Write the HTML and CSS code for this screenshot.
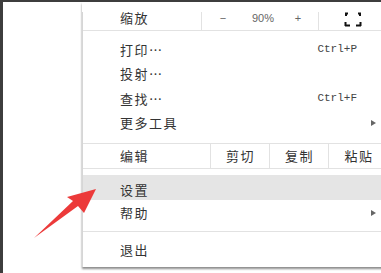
FILE: index.html
```html
<!DOCTYPE html>
<html lang="zh">
<head>
<meta charset="utf-8">
<link rel="stylesheet" href="styles.css">
</head>
<body>
<div class="frame">
  <div class="menu">
    <div class="zoomrow">
      <div class="zlabel">缩放</div>
      <div class="zctrl"><span class="zminus">−</span><span class="zval">90%</span><span class="zplus">+</span></div>
      <div class="zfs">
        <svg class="fsicon" width="18" height="15" viewBox="0 0 18 15"><path d="M2 1V4M1 1.5H4M16 1V4M14 1.5H17M1.5 10V14M1 13.5H6M16.5 10V14M12 13.5H17" stroke="#111" stroke-width="2" fill="none"/></svg>
      </div>
    </div>
    <div class="section s2">
      <div class="item"><span class="lbl">打印…</span><span class="sc">Ctrl+P</span><span class="sub"></span></div>
      <div class="item"><span class="lbl">投射…</span><span class="sc"></span><span class="sub"></span></div>
      <div class="item"><span class="lbl">查找…</span><span class="sc">Ctrl+F</span><span class="sub"></span></div>
      <div class="item"><span class="lbl">更多工具</span><span class="sc"></span><span class="sub"><i class="tri"></i></span></div>
    </div>
    <div class="editrow">
      <div class="elabel">编辑</div>
      <div class="ecell">剪切</div>
      <div class="ecell">复制</div>
      <div class="ecell last">粘贴</div>
    </div>
    <div class="section s3">
      <div class="item hl"><span class="lbl">设置</span><span class="sc"></span><span class="sub"></span></div>
      <div class="item"><span class="lbl">帮助</span><span class="sc"></span><span class="sub"><i class="tri"></i></span></div>
    </div>
    <div class="s4">
      <div class="item quit"><span class="lbl">退出</span><span class="sc"></span><span class="sub"></span></div>
    </div>
  </div>
  <svg class="arrow" width="381" height="273" viewBox="0 0 381 273">
    <polygon points="96,189 84,213 78,206 34,238 73,201 67,197" fill="#ec3a3a"/>
  </svg>
</div>
</body>
</html>
```

FILE: styles.css
```css
html, body {
  margin: 0;
  padding: 0;
  width: 381px;
  height: 273px;
  overflow: hidden;
  background: #fff;
}
.frame {
  position: relative;
  box-sizing: border-box;
  width: 381px;
  height: 273px;
  border-top: 2px solid #3d3d3d;
  border-left: 3px solid #3d3d3d;
  font-family: "Noto Sans CJK SC", "Noto Sans", sans-serif;
  color: #333;
}
.menu {
  margin-left: 79px;
  width: 306px;
  box-sizing: border-box;
  padding-left: 1px;
  background: linear-gradient(#d6d6d6, #d6d6d6) 0 10px / 1px calc(100% - 10px) no-repeat, #fff;
  box-shadow: 0 2px 2px rgba(0, 0, 0, 0.45);
}
.zoomrow {
  display: flex;
  height: 29px;
  box-sizing: border-box;
  border-bottom: 1px solid #e2e2e2;
}
.zlabel, .zctrl {
  box-sizing: border-box;
  background: linear-gradient(#e2e2e2, #e2e2e2) right 10px / 1px calc(100% - 10px) no-repeat;
}
.zlabel {
  width: 119px;
  padding-left: 37px;
  padding-top: 5px;
  font-size: 13px;
  letter-spacing: 1.5px;
  line-height: 22px;
}
.zctrl {
  width: 117px;
  display: flex;
  padding-top: 6px;
  font-family: "Liberation Sans", sans-serif;
  font-size: 11px;
  color: #666;
  line-height: 20px;
}
.zminus { width: 42px; text-align: center; }
.zval { width: 38px; text-align: center; }
.zplus { width: 32px; text-align: center; }
.zfs {
  flex: 1;
  display: flex;
  justify-content: center;
  padding-top: 10px;
  box-sizing: border-box;
}
.fsicon { display: block; margin-left: -1px; }
.section {
  box-sizing: border-box;
  border-bottom: 1px solid #e2e2e2;
}
.s2 {
  height: 113px;
  padding-top: 6px;
}
.item {
  display: flex;
  align-items: center;
  height: 24.5px;
  padding-left: 37px;
  font-size: 13px;
  letter-spacing: 1.5px;
}
.lbl { flex: 1; }
.sc {
  font-family: "Liberation Mono", monospace;
  font-size: 11px;
  letter-spacing: 0;
  color: #444;
}
.sub {
  width: 31px;
  display: flex;
  padding-left: 14px;
  box-sizing: border-box;
}
.tri {
  width: 0;
  height: 0;
  border-top: 3.5px solid transparent;
  border-bottom: 3.5px solid transparent;
  border-left: 5px solid #666;
}
.editrow {
  display: flex;
  height: 25px;
  box-sizing: border-box;
  border-bottom: 1px solid #e2e2e2;
  font-size: 13px;
  letter-spacing: 1.5px;
  line-height: 24px;
}
.elabel {
  width: 128px;
  box-sizing: border-box;
  padding-left: 37px;
  border-right: 1px solid #e2e2e2;
}
.ecell {
  width: 59px;
  box-sizing: border-box;
  border-right: 1px solid #e2e2e2;
  text-align: center;
  padding-left: 1px;
}
.ecell.last { border-right: none; }
.s3 {
  height: 63px;
  padding-top: 6px;
}
.s3 .item {
  height: 25px;
  box-sizing: border-box;
}
.item.hl {
  background: #e5e5e5;
  padding-top: 4px;
}
.s4 .quit {
  height: 35px;
}
.arrow {
  position: absolute;
  left: -3px;
  top: -2px;
  pointer-events: none;
}
```
